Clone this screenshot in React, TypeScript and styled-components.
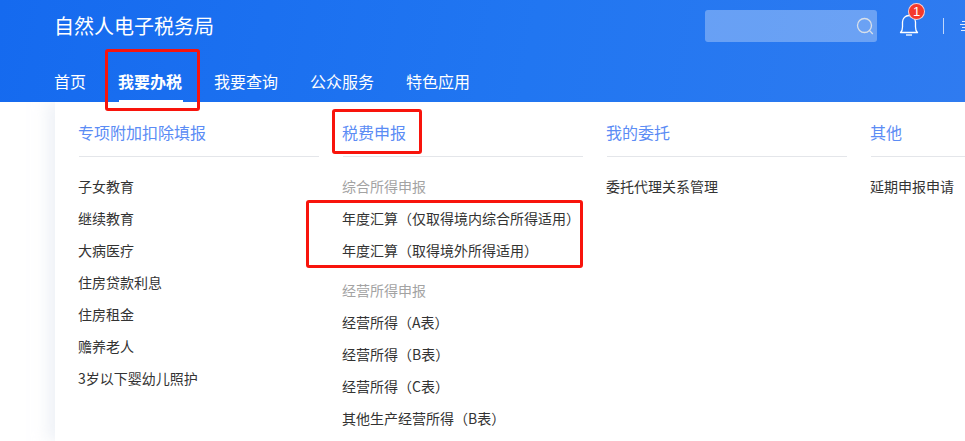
import React from "react";
import styled, { createGlobalStyle } from "styled-components";

const Global = createGlobalStyle`
  html, body { margin: 0; padding: 0; background: #fff; overflow: hidden; }
  body { font-family: "Microsoft YaHei", "Noto Sans CJK SC", "Liberation Sans", sans-serif; }
`;
const Page = styled.div`position: relative; width: 965px; height: 441px; overflow: hidden; background: #fff;`;
const Header = styled.header`
  height: 102px; box-sizing: border-box; padding: 0 0 0 55px; z-index: 1;
  background: linear-gradient(100deg, #156aef 0%, #2176f1 55%, #2f7bf0 100%);
  display: flex; flex-direction: column; position: relative; color: #fff;
`;
const TopRow = styled.div`height: 62px; display: flex; align-items: flex-start;`;
const Brand = styled.div`font-size: 20px; line-height: 28px; margin-top: 12px; width: 650px; flex: none; text-indent: -1px;`;
const SearchBox = styled.div`
  width: 172px; height: 32px; margin-top: 10px; border-radius: 3px; flex: none;
  background: rgba(255,255,255,.3); display: flex; align-items: center; justify-content: flex-end; padding-right: 1px; box-sizing: border-box;
`;
const BellWrap = styled.div`position: relative; width: 20px; height: 22px; margin: 14px 0 0 22px; flex: none;`;
const Badge = styled.span`
  position: absolute; left: 9px; top: -11px; width: 17px; height: 17px; border-radius: 50%; box-sizing: border-box;
  border: 1px solid rgba(255,255,255,.75);
  background: #f5392c; color: #fff; font-size: 13px; line-height: 15px; text-align: center; font-family: "Liberation Sans", sans-serif;
`;
const Divider = styled.div`width: 1px; height: 16px; background: rgba(255,255,255,.7); margin: 18px 0 0 24px; flex: none;`;
const MenuIcon = styled.div`margin: 20px 0 0 16px; flex: none; display: flex;`;
const Nav = styled.nav`display: flex; gap: 32px; height: 40px;`;
const NavItem = styled.div<{ $active?: boolean }>`
  font-size: 16px; line-height: 38px; height: 40px; box-sizing: border-box;
  font-weight: ${p => (p.$active ? 700 : 400)};
  border-bottom: 2px solid ${p => (p.$active ? "#fff" : "transparent")};
  text-indent: -1px; padding-right: 1px;
`;
const Panel = styled.div`
  margin-left: 55px; height: 339px; background: #fff; box-sizing: border-box; padding: 15px 0 0 24px;
  box-shadow: -8px 0 14px rgba(225,232,240,.55); display: flex; gap: 24px; position: relative;
`;
const Column = styled.section<{ $w?: number }>`width: ${p => p.$w ?? 240}px; flex: none;`;
const ColumnTitle = styled.h3`
  margin: 0; height: 39px; line-height: 30px; font-size: 16px; font-weight: 400; color: #5b8cf5;
  border-bottom: 1px solid #e4e6ea; box-sizing: content-box; text-indent: -1px;
`;
const List = styled.div`padding-top: 13px;`;
const Row = styled.div`height: 32px; line-height: 32px; font-size: 14px; color: #333; white-space: nowrap; text-indent: -1px;`;
const GroupLabel = styled(Row)`color: #a3a3a3;`;
const Gap = styled.div`height: 8px;`;
const RedBox = styled.div<{ $x: number; $y: number; $w: number; $h: number }>`
  position: absolute; left: ${p => p.$x}px; top: ${p => p.$y}px; width: ${p => p.$w}px; height: ${p => p.$h}px; z-index: 2;
  border: 3px solid #f8140c; border-radius: 3px; box-sizing: border-box; pointer-events: none;
`;

const col1 = ["子女教育", "继续教育", "大病医疗", "住房贷款利息", "住房租金", "赡养老人", "3岁以下婴幼儿照护"];

export default function App() {
  return (
    <Page>
      <Global />
      <Header>
        <TopRow>
          <Brand>自然人电子税务局</Brand>
          <SearchBox>
            <svg width="22" height="22" viewBox="0 0 22 22" fill="none" stroke="#d8e0ea" strokeWidth="1.3">
              <circle cx="10.5" cy="10.5" r="7" />
              <path d="M15.6 15.6l3.2 3.4" />
            </svg>
          </SearchBox>
          <BellWrap>
            <svg width="20" height="22" viewBox="0 0 20 22" fill="none" stroke="#fff" strokeWidth="1.3">
              <path d="M1.500 18.500c1.600-1.400 2-3 2-5.500V8a6.500 6.500 0 0 1 13 0v5c0 2.500.4 4.100 2 5.500z" strokeLinejoin="round" />
              <path d="M7 21h6" />
            </svg>
            <Badge>1</Badge>
          </BellWrap>
          <Divider />
          <MenuIcon>
            <svg width="10" height="14" viewBox="0 0 10 14" stroke="#fff" strokeOpacity=".85" strokeWidth="1">
              <path d="M2 1.500h8M0 4.500h10M2 7.500h8M1 10.500h9" />
            </svg>
          </MenuIcon>
        </TopRow>
        <Nav>
          <NavItem>首页</NavItem>
          <NavItem $active>我要办税</NavItem>
          <NavItem>我要查询</NavItem>
          <NavItem>公众服务</NavItem>
          <NavItem>特色应用</NavItem>
        </Nav>
      </Header>
      <Panel>
        <Column>
          <ColumnTitle>专项附加扣除填报</ColumnTitle>
          <List>{col1.map(t => <Row key={t}>{t}</Row>)}</List>
        </Column>
        <Column>
          <ColumnTitle>税费申报</ColumnTitle>
          <List>
            <GroupLabel>综合所得申报</GroupLabel>
            <Row>年度汇算（仅取得境内综合所得适用）</Row>
            <Row>年度汇算（取得境外所得适用）</Row>
            <Gap />
            <GroupLabel>经营所得申报</GroupLabel>
            <Row>经营所得（A表）</Row>
            <Row>经营所得（B表）</Row>
            <Row>经营所得（C表）</Row>
            <Row>其他生产经营所得（B表）</Row>
          </List>
        </Column>
        <Column>
          <ColumnTitle>我的委托</ColumnTitle>
          <List><Row>委托代理关系管理</Row></List>
        </Column>
        <Column>
          <ColumnTitle>其他</ColumnTitle>
          <List><Row>延期申报申请</Row></List>
        </Column>
      </Panel>
      <RedBox $x={105} $y={49} $w={95} $h={62} />
      <RedBox $x={332} $y={109} $w={90} $h={45} />
      <RedBox $x={306} $y={200} $w={277} $h={68} />
    </Page>
  );
}
